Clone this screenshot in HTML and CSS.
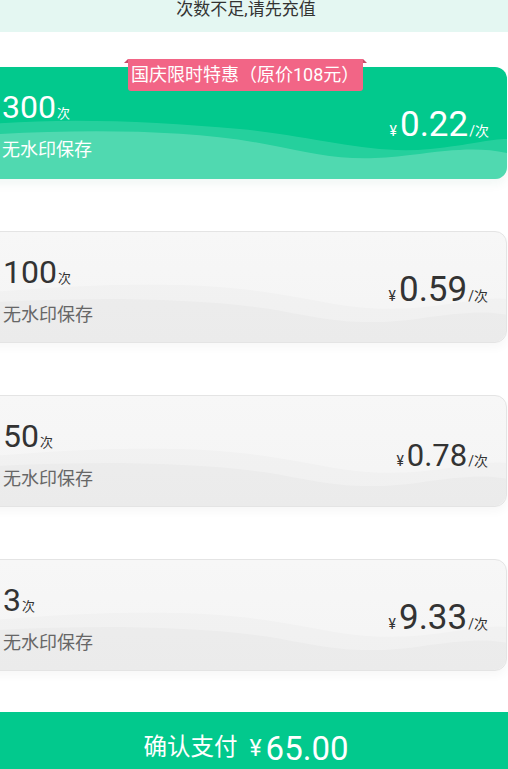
FILE: index.html
```html
<!DOCTYPE html>
<html lang="zh">
<head>
<meta charset="utf-8">
<title>充值</title>
<link rel="stylesheet" href="styles.css">
</head>
<body>
<div class="notice">次数不足,请先充值</div>
<div class="plans">
  <div class="card card-active">
    <svg class="waves" viewBox="0 0 527 112" preserveAspectRatio="none">
      <path class="w1" d="M0,58 C80,50 170,54 260,62 C340,70 390,88 450,82 C490,78 510,72 527,72 L527,112 L0,112 Z"/>
      <path class="w2" d="M0,68 C100,62 210,62 290,78 C340,88 370,96 430,88 C475,82 500,80 527,86 L527,112 L0,112 Z"/>
    </svg>
    <div class="badge">国庆限时特惠（原价108元）</div>
    <div class="left">
      <div class="count"><span class="num">300</span><span class="unit">次</span></div>
      <div class="desc">无水印保存</div>
    </div>
    <div class="right">
      <span class="yen">¥</span><span class="price">0.22</span><span class="per">/次</span>
    </div>
  </div>
  <div class="card">
    <svg class="waves" viewBox="0 0 527 112" preserveAspectRatio="none">
      <path class="g1" d="M0,62 C70,56 160,50 240,56 C320,62 360,80 420,78 C470,76 500,66 527,68 L527,112 L0,112 Z"/>
      <path class="g2" d="M0,72 C100,66 220,66 300,80 C350,90 380,96 440,88 C480,82 505,80 527,84 L527,112 L0,112 Z"/>
    </svg>
    <div class="left">
      <div class="count"><span class="num">100</span><span class="unit">次</span></div>
      <div class="desc">无水印保存</div>
    </div>
    <div class="right">
      <span class="yen">¥</span><span class="price">0.59</span><span class="per">/次</span>
    </div>
  </div>
  <div class="card">
    <svg class="waves" viewBox="0 0 527 112" preserveAspectRatio="none">
      <path class="g1" d="M0,62 C70,56 160,50 240,56 C320,62 360,80 420,78 C470,76 500,66 527,68 L527,112 L0,112 Z"/>
      <path class="g2" d="M0,72 C100,66 220,66 300,80 C350,90 380,96 440,88 C480,82 505,80 527,84 L527,112 L0,112 Z"/>
    </svg>
    <div class="left">
      <div class="count"><span class="num">50</span><span class="unit">次</span></div>
      <div class="desc">无水印保存</div>
    </div>
    <div class="right right-small">
      <span class="yen">¥</span><span class="price">0.78</span><span class="per">/次</span>
    </div>
  </div>
  <div class="card">
    <svg class="waves" viewBox="0 0 527 112" preserveAspectRatio="none">
      <path class="g1" d="M0,62 C70,56 160,50 240,56 C320,62 360,80 420,78 C470,76 500,66 527,68 L527,112 L0,112 Z"/>
      <path class="g2" d="M0,72 C100,66 220,66 300,80 C350,90 380,96 440,88 C480,82 505,80 527,84 L527,112 L0,112 Z"/>
    </svg>
    <div class="left">
      <div class="count"><span class="num">3</span><span class="unit">次</span></div>
      <div class="desc">无水印保存</div>
    </div>
    <div class="right">
      <span class="yen">¥</span><span class="price">9.33</span><span class="per">/次</span>
    </div>
  </div>
</div>
<div class="pay"><span class="pay-label">确认支付</span><span class="pay-yen">¥</span><span class="pay-amount">65.00</span></div>
</body>
</html>
```

FILE: styles.css
```css
html, body {
  margin: 0;
  padding: 0;
  background: #ffffff;
  font-family: Roboto, "Noto Sans CJK SC", sans-serif;
  overflow: hidden;
}

.notice {
  height: 32px;
  box-sizing: border-box;
  background: #e4f7f2;
  color: #333333;
  font-size: 17px;
  line-height: 18px;
  text-align: center;
  padding-right: 16px;
}

.plans {
  display: flex;
  flex-direction: column;
  gap: 52px;
  padding-top: 35px;
  margin-left: -20px;
  margin-right: 1px;
}

.card {
  position: relative;
  height: 112px;
  box-sizing: border-box;
  border-radius: 12px;
  display: flex;
  justify-content: space-between;
  align-items: flex-start;
  padding: 0 18px 0 22px;
  background: linear-gradient(#f7f7f7, #f4f4f4);
  border: 1px solid #e4e4e4;
  box-shadow: 0 5px 10px rgba(0, 0, 0, 0.03);
  color: #333333;
}

.card-active {
  background: #02c98d;
  border: none;
  color: #ffffff;
  box-shadow: 0 6px 10px rgba(0, 120, 80, 0.05);
}

.waves {
  position: absolute;
  left: 0;
  top: 0;
  width: 100%;
  height: 100%;
  border-radius: 12px;
}

.w1 { fill: rgba(255, 255, 255, 0.14); }
.w2 { fill: rgba(255, 255, 255, 0.2); }
.g1 { fill: rgba(0, 0, 0, 0.014); }
.g2 { fill: rgba(0, 0, 0, 0.018); }

.badge {
  position: absolute;
  left: 148px;
  top: -8px;
  height: 32px;
  width: 235px;
  box-sizing: border-box;
  background: #f26586;
  color: #ffffff;
  font-size: 18px;
  line-height: 32px;
  padding-left: 3px;
  border-radius: 0 0 3px 3px;
  white-space: nowrap;
}

.badge::before,
.badge::after {
  content: "";
  position: absolute;
  top: 0;
  width: 0;
  height: 0;
  border-bottom: 4px solid #c94b69;
}

.badge::before {
  left: -4px;
  border-left: 4px solid transparent;
}

.badge::after {
  right: -4px;
  border-right: 4px solid transparent;
}

.left {
  position: relative;
  display: flex;
  flex-direction: column;
  padding-top: 22px;
}

.count {
  line-height: 36px;
  height: 36px;
}

.num {
  font-size: 32px;
}

.unit {
  font-size: 13px;
  margin-left: 1px;
}

.desc {
  margin-top: 13px;
  font-size: 18px;
  line-height: 24px;
  color: #666666;
}

.card-active .desc {
  color: #ffffff;
}

.right {
  position: relative;
  padding-top: 38px;
  line-height: 40px;
  white-space: nowrap;
}

.right-small {
  padding-top: 40px;
}

.yen {
  font-size: 14px;
  margin-right: 3px;
}

.price {
  font-size: 35px;
}

.right-small .price {
  font-size: 31px;
}

.per {
  font-size: 14px;
  margin-left: 1px;
}

.pay {
  margin-top: 41px;
  height: 72px;
  box-sizing: border-box;
  padding-right: 16px;
  background: #02c98d;
  color: #ffffff;
  display: flex;
  justify-content: center;
  align-items: center;
  line-height: 1;
}

.pay-label {
  font-size: 23.5px;
  margin-right: 12px;
}

.pay-yen {
  font-size: 23px;
  margin-right: 4px;
}

.pay-amount {
  font-size: 33px;
}
```
